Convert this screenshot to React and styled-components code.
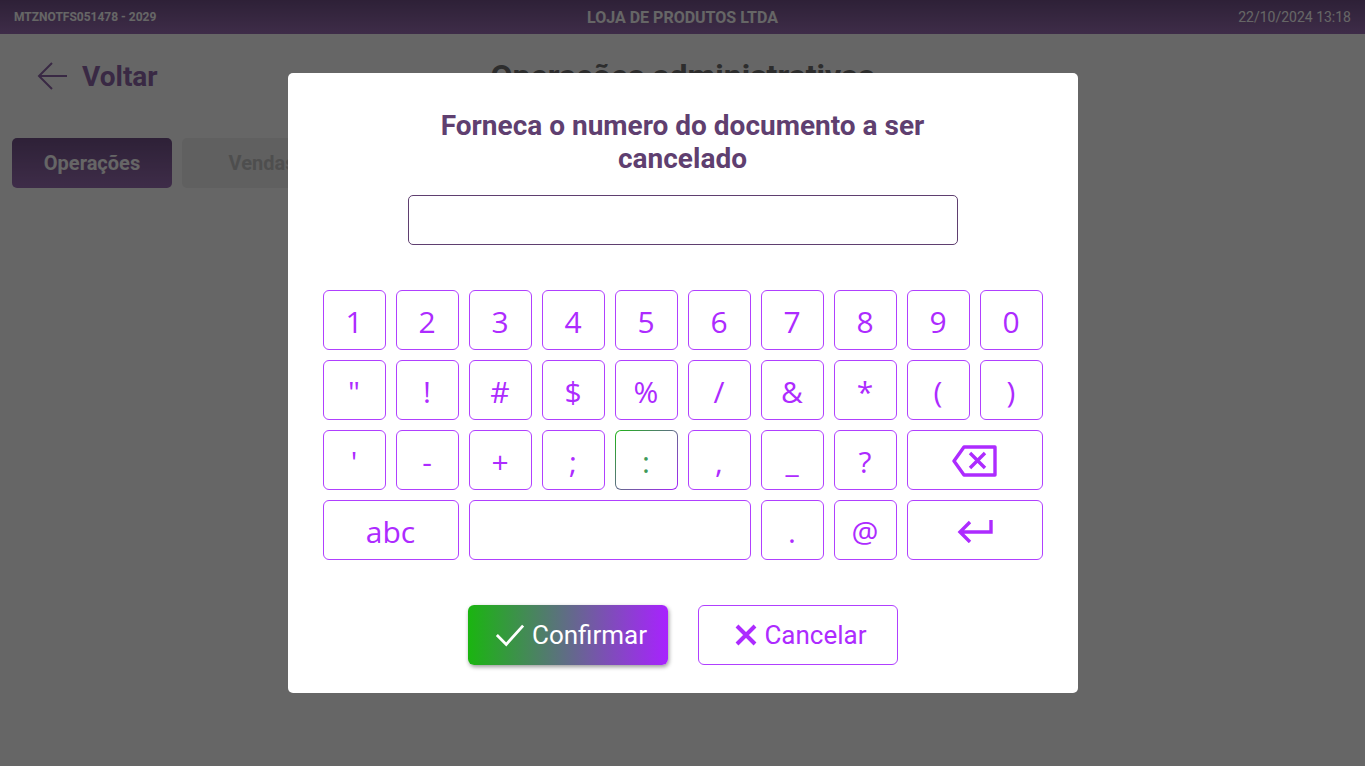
import React from "react";
import styled, { createGlobalStyle } from "styled-components";

const GlobalStyle = createGlobalStyle`
  html, body {
    margin: 0;
    padding: 0;
    height: 100%;
    background: #ffffff;
    font-family: Roboto, "Liberation Sans", sans-serif;
  }
  * { box-sizing: border-box; }
`;

const Page = styled.div`
  width: 100%;
  height: 100vh;
  overflow: hidden;
`;

const Header = styled.header`
  height: 34px;
  padding: 0 14px;
  display: grid;
  grid-template-columns: 1fr auto 1fr;
  align-items: center;
  background: linear-gradient(180deg, #73528a, #9c6fb5);
  color: #ffffff;
`;

const Serial = styled.span`
  font-size: 12px;
  font-weight: 700;
`;

const Company = styled.span`
  font-size: 16px;
  font-weight: 700;
`;

const DateTime = styled.span`
  font-size: 14px;
  text-align: right;
`;

const TitleBar = styled.div`
  height: 84px;
  padding: 0 37px;
  display: grid;
  grid-template-columns: 1fr auto 1fr;
  align-items: center;
`;

const BackLink = styled.div`
  display: flex;
  align-items: center;
  gap: 15px;
  font-size: 28px;
  font-weight: 700;
  color: #9067aa;
`;

const PageTitle = styled.h1`
  margin: 0;
  font-size: 32px;
  font-weight: 700;
  color: #707070;
`;

const Tabs = styled.nav`
  padding: 20px 12px 0;
  display: flex;
  gap: 10px;
`;

const Tab = styled.div`
  width: 160px;
  height: 50px;
  border-radius: 5px;
  display: flex;
  align-items: center;
  justify-content: center;
  font-size: 20px;
  font-weight: 700;
  color: ${(p) => (p.$active ? "#ffffff" : "#c4c4c4")};
  background: ${(p) =>
    p.$active ? "linear-gradient(180deg, #73528a, #9c6fb5)" : "#f0f0f0"};
`;

const Backdrop = styled.div`
  position: fixed;
  inset: 0;
  background: rgba(0, 0, 0, 0.6);
  display: flex;
  align-items: center;
  justify-content: center;
`;

const Modal = styled.div`
  width: 790px;
  height: 620px;
  padding: 36px 35px 28px;
  background: #ffffff;
  border-radius: 5px;
  display: flex;
  flex-direction: column;
  align-items: center;
`;

const ModalTitle = styled.h2`
  width: 550px;
  margin: 0;
  font-size: 28px;
  line-height: 33px;
  font-weight: 700;
  text-align: center;
  color: #5f3f70;
`;

const DocInput = styled.input`
  width: 550px;
  height: 50px;
  margin-top: 20px;
  border: 1px solid #5f3f70;
  border-radius: 5px;
  outline: none;
  background: #ffffff;
`;

const Keyboard = styled.div`
  margin-top: 45px;
  display: grid;
  grid-template-columns: repeat(10, 63px);
  grid-auto-rows: 60px;
  gap: 10px;
`;

const Key = styled.button`
  grid-column: span ${(p) => p.$span || 1};
  padding: 2px 0 0;
  display: flex;
  align-items: center;
  justify-content: center;
  font-family: "Open Sans", "Noto Sans", sans-serif;
  font-size: 30px;
  color: #ad2bff;
  border: 1px solid #b040ff;
  border-radius: 6px;
  background: #ffffff;

  ${(p) =>
    p.$hover &&
    `
    border-color: transparent;
    background: linear-gradient(#fff, #fff) padding-box,
      linear-gradient(135deg, #1db515, #a822ff) border-box;
    color: #3f9a5a;
  `}
`;

const Actions = styled.div`
  margin-top: 45px;
  display: flex;
  gap: 30px;
`;

const ActionButton = styled.button`
  width: 200px;
  height: 60px;
  padding: 0 0 0 7px;
  display: flex;
  align-items: center;
  justify-content: center;
  gap: 7px;
  font-family: Roboto, sans-serif;
  font-size: 26px;
  border-radius: 6px;
`;

const ConfirmButton = styled(ActionButton)`
  border: none;
  color: #ffffff;
  background: linear-gradient(90deg, #1ab510, #a822ff);
  box-shadow: 1px 2px 4px rgba(0, 0, 0, 0.4);
`;

const CancelButton = styled(ActionButton)`
  border: 1px solid #b040ff;
  color: #ad2bff;
  background: #ffffff;
`;

const rows = [
  ["1", "2", "3", "4", "5", "6", "7", "8", "9", "0"],
  ['"', "!", "#", "$", "%", "/", "&", "*", "(", ")"],
  ["'", "-", "+", ";", ":", ",", "_", "?"],
];

const BackArrow = () => (
  <svg width="30" height="30" viewBox="0 0 30 30" fill="none" stroke="currentColor" strokeWidth="2">
    <path d="M30 15H2M15 2L2 15l13 13" />
  </svg>
);

const BackspaceIcon = () => (
  <svg width="46" height="34" viewBox="0 0 46 34" fill="none" stroke="currentColor" strokeWidth="3.4" strokeLinejoin="round">
    <path d="M12 3h31v28H12L2 17z" />
    <path d="M18 9l15 15M33 9L18 24" />
  </svg>
);

const EnterIcon = () => (
  <svg width="36" height="24" viewBox="0 0 36 24" fill="none" stroke="currentColor" strokeWidth="3.4">
    <path d="M34 1v12H4M13 3L3 13l10 10" />
  </svg>
);

const CheckIcon = () => (
  <svg width="30" height="24" viewBox="0 0 32 24" fill="none" stroke="currentColor" strokeWidth="3">
    <path d="M2 12l10 10L30 2" />
  </svg>
);

const CloseIcon = () => (
  <svg width="22" height="22" viewBox="0 0 22 22" fill="none" stroke="currentColor" strokeWidth="4">
    <path d="M2 2l18 18M20 2L2 20" />
  </svg>
);

export default function App() {
  return (
    <Page>
      <GlobalStyle />
      <Header>
        <Serial>MTZNOTFS051478 - 2029</Serial>
        <Company>LOJA DE PRODUTOS LTDA</Company>
        <DateTime>22/10/2024 13:18</DateTime>
      </Header>
      <TitleBar>
        <BackLink>
          <BackArrow />
          Voltar
        </BackLink>
        <PageTitle>Operações administrativas</PageTitle>
      </TitleBar>
      <Tabs>
        <Tab $active>Operações</Tab>
        <Tab>Vendas</Tab>
      </Tabs>

      <Backdrop>
        <Modal>
          <ModalTitle>Forneca o numero do documento a ser cancelado</ModalTitle>
          <DocInput />
          <Keyboard>
            {rows.flat().map((k) => (
              <Key key={k} $hover={k === ":"}>
                {k}
              </Key>
            ))}
            <Key $span={2}>
              <BackspaceIcon />
            </Key>
            <Key $span={2}>abc</Key>
            <Key $span={4} />
            <Key>.</Key>
            <Key>@</Key>
            <Key $span={2}>
              <EnterIcon />
            </Key>
          </Keyboard>
          <Actions>
            <ConfirmButton>
              <CheckIcon />
              Confirmar
            </ConfirmButton>
            <CancelButton>
              <CloseIcon />
              Cancelar
            </CancelButton>
          </Actions>
        </Modal>
      </Backdrop>
    </Page>
  );
}
